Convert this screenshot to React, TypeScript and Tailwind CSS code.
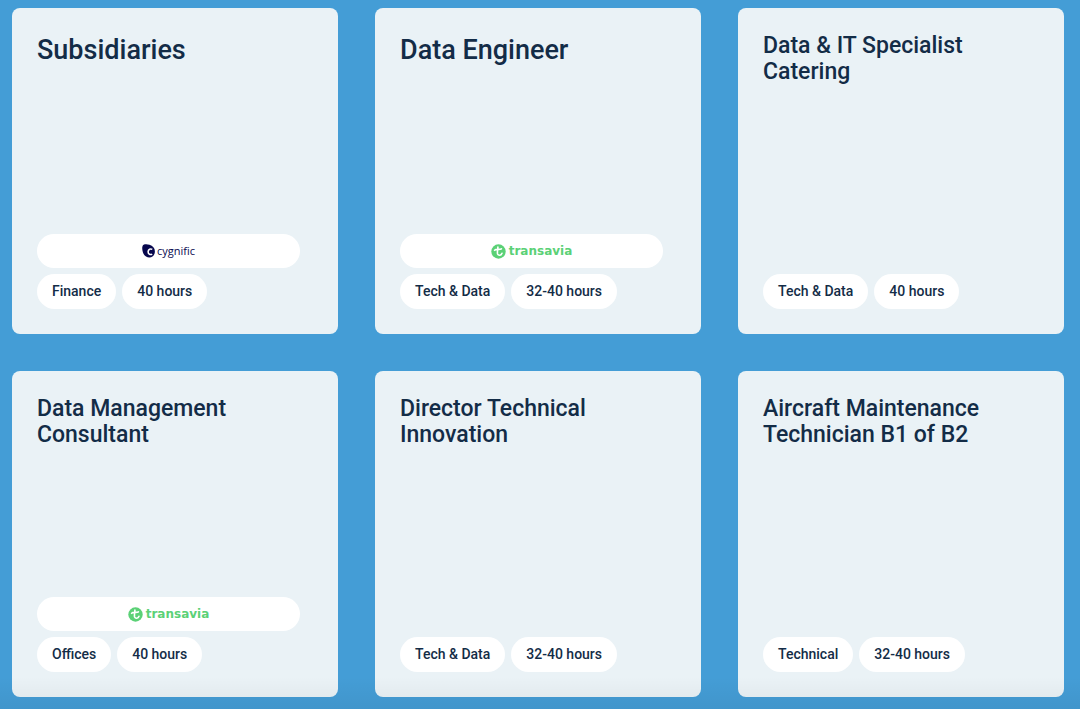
type Brand = "cygnific" | "transavia";

type Job = {
  title: string;
  large?: boolean;
  brand?: Brand;
  tags: string[];
};

const jobs: Job[] = [
  { title: "Subsidiaries", large: true, brand: "cygnific", tags: ["Finance", "40 hours"] },
  { title: "Data Engineer", large: true, brand: "transavia", tags: ["Tech & Data", "32-40 hours"] },
  { title: "Data & IT Specialist Catering", tags: ["Tech & Data", "40 hours"] },
  { title: "Data Management Consultant", brand: "transavia", tags: ["Offices", "40 hours"] },
  { title: "Director Technical Innovation", tags: ["Tech & Data", "32-40 hours"] },
  { title: "Aircraft Maintenance Technician B1 of B2", tags: ["Technical", "32-40 hours"] },
];

function CygnificLogo() {
  return (
    <span className="flex items-center gap-0.5 text-[#0b0b50]">
      <svg viewBox="0 0 13 14" className="h-3.5 w-[13px]" aria-hidden="true">
        <path
          d="M1.600.8C3 .1 5.400.2 7.500.8c3.200.9 5.400 3.300 5.400 6.500 0 3.500-2.300 6.200-5.500 6.200-3.300 0-5.600-2.300-6.600-5.500C0 5.400-.2 1.900 1.600.8Z"
          fill="#07074d"
        />
        <path
          d="M10.300 5.400C8.600 4.400 6.200 5.100 6.100 7.700c0 2.600 2.300 3.400 4.100 2.400"
          fill="none"
          stroke="#fff"
          strokeWidth="1.600"
        />
      </svg>
      <span className="font-['Open_Sans',sans-serif] text-[11px] leading-4">cygnific</span>
    </span>
  );
}

function TransaviaLogo() {
  return (
    <span className="flex items-center gap-[3px] text-[#5bd176]">
      <svg viewBox="0 0 15 15" className="size-[15px]" aria-hidden="true">
        <circle cx="7.500" cy="7.500" r="7.200" fill="currentColor" />
        <path
          d="M3.600 6.300C4.700 5.200 6.200 5.400 7.500 5.400s2.200 0 2.900-.6M6.900 3.100c0 2.500-.9 5.100-.3 6.900.7 1.800 3.500 1.900 4.400-.7"
          fill="none"
          stroke="#fff"
          strokeWidth="1.600"
          strokeLinecap="round"
        />
      </svg>
      <span className="font-['DejaVu_Sans',sans-serif] text-xs leading-4 font-bold">
        transavia
      </span>
    </span>
  );
}

function JobCard({ job }: { job: Job }) {
  return (
    <a
      href="#"
      className="flex aspect-square flex-col justify-between rounded-lg bg-[#eaf2f6] p-[25px]"
    >
      <h2
        className={
          job.large
            ? "text-[27px] leading-[34px] font-medium"
            : "text-[23px] leading-[26px] font-medium"
        }
      >
        {job.title}
      </h2>
      <div className="flex flex-col gap-1.5 pr-[13px]">
        {job.brand && (
          <div className="flex h-[34px] items-center justify-center rounded-full bg-white">
            {job.brand === "cygnific" ? <CygnificLogo /> : <TransaviaLogo />}
          </div>
        )}
        <ul className="flex flex-wrap gap-1.5">
          {job.tags.map((tag) => (
            <li
              key={tag}
              className="rounded-full bg-white px-[15px] py-2 text-sm leading-[19px] font-medium"
            >
              {tag}
            </li>
          ))}
        </ul>
      </div>
    </a>
  );
}

export default function App() {
  return (
    <main className="relative min-h-screen bg-[#449dd6] pt-2 pr-4 pb-3 pl-3 font-['Roboto',sans-serif] text-[#132c47]">
      <div className="grid grid-cols-3 gap-[37px]">
        {jobs.map((job) => (
          <JobCard key={job.title} job={job} />
        ))}
      </div>
      <div className="pointer-events-none absolute inset-x-0 bottom-0 h-8 bg-linear-to-b from-transparent to-black/5" />
    </main>
  );
}
